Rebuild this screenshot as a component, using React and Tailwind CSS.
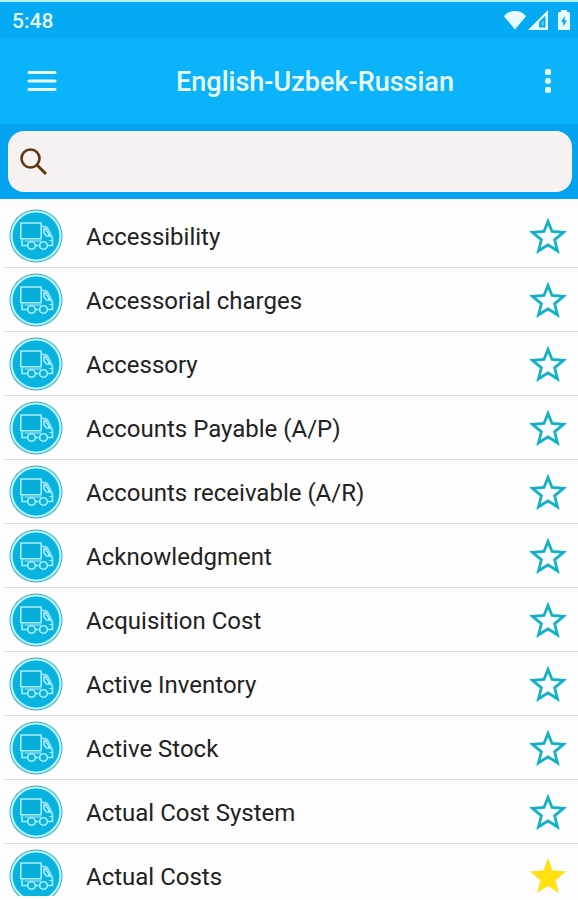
import { useState } from 'react';
import { clsx } from 'clsx';

const TERMS = [
  { id: 1, title: 'Accessibility' },
  { id: 2, title: 'Accessorial charges' },
  { id: 3, title: 'Accessory' },
  { id: 4, title: 'Accounts Payable (A/P)' },
  { id: 5, title: 'Accounts receivable (A/R)' },
  { id: 6, title: 'Acknowledgment' },
  { id: 7, title: 'Acquisition Cost' },
  { id: 8, title: 'Active Inventory' },
  { id: 9, title: 'Active Stock' },
  { id: 10, title: 'Actual Cost System' },
  { id: 11, title: 'Actual Costs' },
];

// ── icons ────────────────────────────────────────────────────────────────────

function WifiIcon() {
  return (
    <svg viewBox="0 0 24 20" className="h-5 w-6" fill="currentColor" aria-hidden="true">
      <path d="M12 19.500 1 6.200C3.500 2.800 7.400 1 12 1s8.500 1.800 11 5.200z" />
    </svg>
  );
}

function SignalIcon() {
  return (
    <svg viewBox="0 0 20 20" className="size-5" aria-hidden="true">
      <path d="M0 20 20 0v20z" fill="currentColor" />
      <path d="M11 12 17.500 5.500V17.500H11z" fill="#05a9f4" />
      <path d="M13.500 15.500v-3l2-2v5z" fill="currentColor" opacity=".5" />
    </svg>
  );
}

function BatteryIcon() {
  return (
    <svg viewBox="0 0 12 20" className="h-5 w-3" aria-hidden="true">
      <path d="M3 2V0h6v2h1.500Q12 2 12 3.500v15q0 1.500-1.500 1.500h-9Q0 20 0 18.500v-15Q0 2 1.500 2z" fill="currentColor" />
      <path d="M6.800 6v4.500H9L5.200 16.500V12H3z" fill="#05a9f4" />
    </svg>
  );
}

function MenuIcon() {
  return (
    <svg viewBox="0 0 30 22" className="h-[22px] w-[30px]" stroke="currentColor" strokeWidth="3" strokeLinecap="round" aria-hidden="true">
      <path d="M2 2.500h26M2 11h26M2 19.500h26" />
    </svg>
  );
}

function MoreIcon() {
  return (
    <svg viewBox="0 0 6 26" className="h-[26px] w-[6px]" fill="currentColor" aria-hidden="true">
      <rect y="1" width="6" height="6" rx="1.500" />
      <rect y="10" width="6" height="6" rx="3" />
      <rect y="19" width="6" height="6" rx="2" />
    </svg>
  );
}

function SearchIcon() {
  return (
    <svg viewBox="0 0 28 28" className="size-7" fill="none" stroke="#5b3a10" aria-hidden="true">
      <circle cx="10.500" cy="10.500" r="9" strokeWidth="2.600" />
      <path d="m17 17 9 9" strokeWidth="3" />
    </svg>
  );
}

function TruckIcon() {
  return (
    <svg viewBox="0 0 54 54" className="size-[54px] shrink-0" fill="none" aria-hidden="true">
      <circle cx="27" cy="27" r="26.500" fill="#2cadcb" />
      <circle cx="27" cy="27" r="24.500" fill="#08b3e0" stroke="#b9f3fb" strokeWidth="2.200" />
      <g stroke="#a9eefb" strokeWidth="1.600" strokeLinejoin="round">
        <path d="M11.800 14h20.400v15.800H11.800z" fill="#06addd" />
        <path d="M13 30v6.500h5.500M27 36.500h3.500" />
        <path d="M33 17.500h2.500q2 0 3 1.500l4 8q1 1.500 1 3.500v6h-4.500" />
        <path d="M35 19.500h1.500l4.500 8-3.500-.5-2.500-3z" />
        <path d="M40.500 31.500h3M16 32h16.500" strokeWidth="1.200" />
        <circle cx="22.500" cy="36.500" r="3.800" fill="#08b3e0" />
        <circle cx="34.500" cy="36.500" r="3.800" fill="#08b3e0" />
      </g>
    </svg>
  );
}

function StarIcon({ filled }) {
  return (
    <svg viewBox="0 0 38 36" className="h-9 w-[38px]" aria-hidden="true">
      {filled ? (
        <path d="M19 0l4.500 12.500L37 13.400l-10.500 9L30 35l-11-7-11 7 3.500-12.600-10.500-9 13.500-.9z" fill="#ffe010" />
      ) : (
        <path
          d="M19 3.500l4 10 11.500.9-8.900 7.400 2.900 11-9.500-6-9.500 6 2.900-11-8.900-7.400 11.500-.9z"
          fill="none" stroke="#10b2cb" strokeWidth="2.800"
        />
      )}
    </svg>
  );
}

// ── bars ─────────────────────────────────────────────────────────────────────

function StatusBar() {
  return (
    <div className="flex h-[38px] items-center justify-between border-t-2 border-[#b5f1fd] bg-[#05a9f4] pr-2 pl-3 text-[#e8fbff]">
      <span className="pt-0.5 text-[21px] leading-6 font-medium">5:48</span>
      <div className="flex items-center">
        <WifiIcon />
        <span className="ml-px"><SignalIcon /></span>
        <span className="ml-2.5"><BatteryIcon /></span>
      </div>
    </div>
  );
}

function AppBar() {
  return (
    <header className="flex h-[86px] items-center bg-[#0ab3fa] px-5 text-[#e8fbff]">
      <button type="button" aria-label="Menu" className="flex w-11 justify-center">
        <MenuIcon />
      </button>
      <h1 className="flex-1 pt-0.5 pl-7 text-center text-[27px] leading-8 font-medium">English-Uzbek-Russian</h1>
      <button type="button" aria-label="More" className="flex w-5 justify-center">
        <MoreIcon />
      </button>
    </header>
  );
}

function SearchBar({ value, onChange }) {
  return (
    <div className="bg-[#04a3f0] py-[7px] pr-1.5 pl-2">
      <label className="flex h-[61px] items-center gap-3 rounded-2xl bg-[#f8f1f1] px-3">
        <SearchIcon />
        <input
          type="text"
          aria-label="Search"
          value={value}
          onChange={e => onChange(e.target.value)}
          className="min-w-0 flex-1 bg-transparent text-2xl text-[#222] outline-none"
        />
      </label>
    </div>
  );
}

// ── list ─────────────────────────────────────────────────────────────────────

function TermRow({ term, last, starred, onToggle }) {
  return (
    <li className={clsx('flex h-16 items-center border-b pr-[11px] pl-[5px]', last ? 'border-transparent' : 'border-[#dcdcdc]')}>
      <TruckIcon />
      <span className="ml-[23px] flex-1 pt-0.5 text-2xl text-[#222]">{term.title}</span>
      <button type="button" aria-label="Favorite" aria-pressed={starred} onClick={onToggle}>
        <StarIcon filled={starred} />
      </button>
    </li>
  );
}

export default function App() {
  const [query, setQuery] = useState('');
  const [starred, setStarred] = useState([11]);

  const toggle = (id) =>
    setStarred(s => (s.includes(id) ? s.filter(x => x !== id) : [...s, id]));

  const visible = TERMS.filter(t => t.title.toLowerCase().includes(query.toLowerCase()));

  return (
    <div className="flex h-screen flex-col bg-[#fdfdfd] pb-1 font-['Roboto',sans-serif]">
      <StatusBar />
      <AppBar />
      <SearchBar value={query} onChange={setQuery} />
      <ul className="min-h-0 flex-1 overflow-y-auto pt-[5px] pl-1 [scrollbar-width:none]">
        {visible.map((t, i) => (
          <TermRow
            key={t.id}
            term={t}
            last={i === visible.length - 1}
            starred={starred.includes(t.id)}
            onToggle={() => toggle(t.id)}
          />
        ))}
      </ul>
    </div>
  );
}
